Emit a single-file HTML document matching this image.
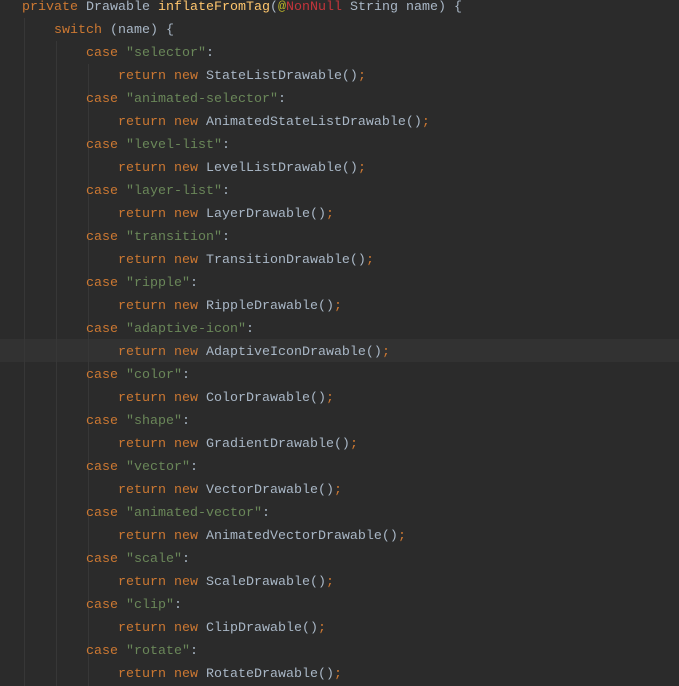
<!DOCTYPE html>
<html><head><style>
html,body{margin:0;padding:0;background:#2b2b2b;width:679px;height:686px;overflow:hidden}
.c{position:absolute;top:-4.5px;left:22px;font-family:"Liberation Mono",monospace;font-size:13.33px;line-height:23px;color:#a9b7c6;white-space:pre}
.hl{position:absolute;left:0;top:339px;width:679px;height:23px;background:#323232}
.g{position:absolute;width:1px;background:#373737}
.k{color:#cc7832}.s{color:#6a8759}.m{color:#ffc66d}.a{color:#bbb529}.n{color:#c3353b}
</style></head><body>
<div class="hl"></div>
<div class="g" style="left:24px;top:18px;height:668px"></div>
<div class="g" style="left:56px;top:41px;height:645px"></div>
<div class="g" style="left:88px;top:64px;height:622px"></div>
<div class="c"><span class="k">private</span> Drawable <span class="m">inflateFromTag</span>(<span class="a">@</span><span class="n">NonNull</span> String name) {
    <span class="k">switch</span> (name) {
        <span class="k">case</span> <span class="s">"selector"</span>:
            <span class="k">return new</span> StateListDrawable()<span class="k">;</span>
        <span class="k">case</span> <span class="s">"animated-selector"</span>:
            <span class="k">return new</span> AnimatedStateListDrawable()<span class="k">;</span>
        <span class="k">case</span> <span class="s">"level-list"</span>:
            <span class="k">return new</span> LevelListDrawable()<span class="k">;</span>
        <span class="k">case</span> <span class="s">"layer-list"</span>:
            <span class="k">return new</span> LayerDrawable()<span class="k">;</span>
        <span class="k">case</span> <span class="s">"transition"</span>:
            <span class="k">return new</span> TransitionDrawable()<span class="k">;</span>
        <span class="k">case</span> <span class="s">"ripple"</span>:
            <span class="k">return new</span> RippleDrawable()<span class="k">;</span>
        <span class="k">case</span> <span class="s">"adaptive-icon"</span>:
            <span class="k">return new</span> AdaptiveIconDrawable()<span class="k">;</span>
        <span class="k">case</span> <span class="s">"color"</span>:
            <span class="k">return new</span> ColorDrawable()<span class="k">;</span>
        <span class="k">case</span> <span class="s">"shape"</span>:
            <span class="k">return new</span> GradientDrawable()<span class="k">;</span>
        <span class="k">case</span> <span class="s">"vector"</span>:
            <span class="k">return new</span> VectorDrawable()<span class="k">;</span>
        <span class="k">case</span> <span class="s">"animated-vector"</span>:
            <span class="k">return new</span> AnimatedVectorDrawable()<span class="k">;</span>
        <span class="k">case</span> <span class="s">"scale"</span>:
            <span class="k">return new</span> ScaleDrawable()<span class="k">;</span>
        <span class="k">case</span> <span class="s">"clip"</span>:
            <span class="k">return new</span> ClipDrawable()<span class="k">;</span>
        <span class="k">case</span> <span class="s">"rotate"</span>:
            <span class="k">return new</span> RotateDrawable()<span class="k">;</span>
</div>
</body></html>
